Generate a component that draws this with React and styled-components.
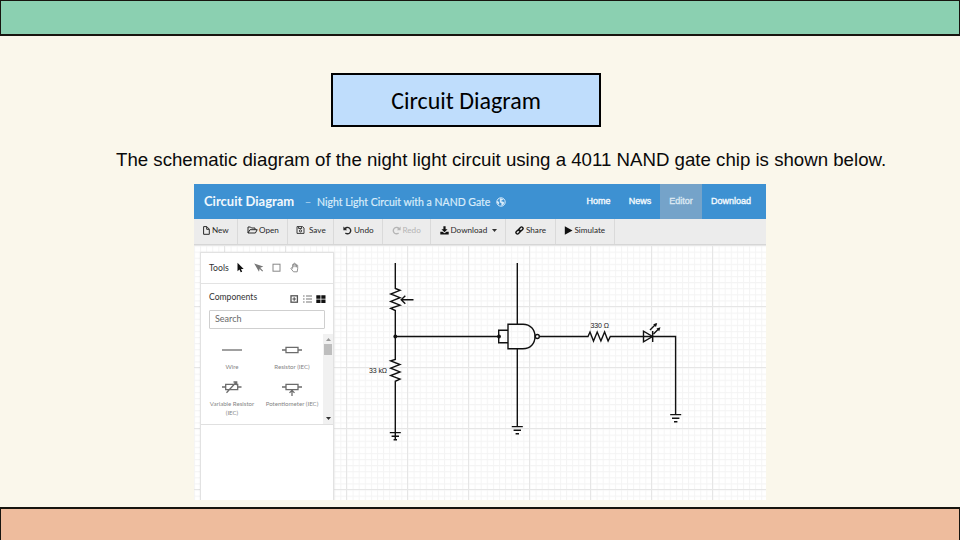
import React from "react";
import styled, { createGlobalStyle } from "styled-components";

const GlobalStyle = createGlobalStyle`
  * { box-sizing: border-box; }
  body { margin: 0; background: #faf7eb; overflow: hidden; }
`;

const Slide = styled.main`
  width: 960px;
  height: 540px;
  display: flex;
  flex-direction: column;
  align-items: center;
  background: #faf7eb;
  overflow: hidden;
`;

const Band = styled.div`
  flex: none;
  width: 960px;
  height: ${(p) => p.$height}px;
  background: ${(p) => p.$color};
  border: solid #17150f;
  border-width: ${(p) => p.$borders};
`;

const Heading = styled.h1`
  flex: none;
  width: 270px;
  height: 54px;
  margin: 37px 0 0 -28px;
  border: 2px solid #000;
  background: #bfddfc;
  color: #000;
  display: flex;
  align-items: center;
  justify-content: center;
  font: 400 24px Carlito, Lato, sans-serif;
`;

const Lead = styled.p`
  flex: none;
  width: 960px;
  height: 24px;
  margin: 21px 0 12px;
  padding-left: 116px;
  font: 400 18.67px/24px "Liberation Sans", Arial, sans-serif;
  white-space: nowrap;
  color: #0a0a0a;
`;

const AppWindow = styled.section`
  flex: none;
  width: 572px;
  height: 316px;
  margin: 0 0 7px;
  display: flex;
  flex-direction: column;
  font-family: Lato, sans-serif;
  background: #fff;
  overflow: hidden;
`;

const Header = styled.header`
  height: 35px;
  flex: none;
  display: flex;
  align-items: center;
  padding-left: 10px;
  background: #3d91d2;
  color: #fff;
`;

const Brand = styled.div`
  width: 101px;
  font-weight: 700;
  font-size: 13px;
  white-space: nowrap;
  padding-bottom: 2px;
  color: #f1f8fd;
`;

const DocTitle = styled.div`
  width: 272px;
  display: flex;
  align-items: center;
  white-space: nowrap;
  font-size: 10.5px;
  -webkit-text-stroke: 0.2px #d9ecfa;
  color: #d9ecfa;
`;

const Dash = styled.span`
  width: 12px;
  opacity: 0.65;
`;

const GlobeSlot = styled.span`
  display: flex;
  margin-left: 6px;
`;

const NavLink = styled.a`
  height: 35px;
  width: ${(p) => p.$width}px;
  display: flex;
  align-items: center;
  justify-content: center;
  padding-bottom: 1px;
  font: 400 9px "Liberation Sans", Arial, sans-serif;
  -webkit-text-stroke: 0.35px currentColor;
  color: ${(p) => (p.$active ? "#dce8f2" : "#f4fafe")};
  background: ${(p) => (p.$active ? "#75a3c9" : "transparent")};
`;

const Toolbar = styled.div`
  height: 26px;
  flex: none;
  display: flex;
  background: #ececec;
  border-bottom: 1px solid #d6d6d6;
`;

const ToolButton = styled.div`
  width: ${(p) => p.$width}px;
  display: flex;
  align-items: center;
  padding: 0 0 3px ${(p) => p.$pad}px;
  gap: ${(p) => p.$gap || 2}px;
  border-right: 1px solid #dadada;
  font-size: 8.15px;
  white-space: nowrap;
  color: ${(p) => (p.$disabled ? "#b5b5b5" : "#292929")};
`;

const MenuCaret = styled.span`
  display: flex;
  margin-left: 3px;
`;

const Workspace = styled.div`
  position: relative;
  height: 255px;
  flex: none;
  padding: 7px 0 0 6px;
`;

const Drawing = styled.svg`
  position: absolute;
  inset: 0;
`;

const Panel = styled.aside`
  position: relative;
  width: 134px;
  height: 250px;
  background: #fff;
  border: 1px solid #e2e2e2;
  border-bottom: 0;
  box-shadow: 0 0 2px rgba(0, 0, 0, 0.08);
  color: #333;
`;

const ToolsRow = styled.div`
  height: 31px;
  display: flex;
  align-items: center;
  padding: 0 0 1px 8px;
  border-bottom: 1px solid #e3e3e3;
  font-size: 8.7px;
`;

const ToolsLabel = styled.span`
  width: 27px;
`;

const ToolIcon = styled.span`
  width: 18px;
  height: 12px;
  display: flex;
`;

const ComponentsRow = styled.div`
  height: 26px;
  display: flex;
  align-items: center;
  padding: 0 7px 0 8px;
  justify-content: space-between;
  font-size: 8.6px;
`;

const ViewSwitch = styled.span`
  display: flex;
  padding-top: 4px;
`;

const SearchField = styled.div`
  width: 116px;
  height: 19px;
  margin-left: 8px;
  border: 1px solid #cfcfcf;
  border-radius: 1px;
  padding-left: 5px;
  font-size: 9px;
  line-height: 16px;
  color: #686868;
`;

const Library = styled.div`
  height: 96px;
  display: flex;
  border-bottom: 1px solid #e0e0e0;
`;

const Parts = styled.div`
  width: 123px;
  padding-top: 14px;
  display: grid;
  grid-template-columns: 62px 58px;
  grid-template-rows: 37px 40px;
`;

const Part = styled.div`
  display: flex;
  flex-direction: column;
  align-items: center;
  font-size: 6.1px;
  line-height: 9px;
  text-align: center;
  color: #858585;
`;

const PartLabel = styled.span`
  margin-top: 5px;
  white-space: pre;
`;

const Scrollbar = styled.div`
  width: 10px;
  height: 90px;
  margin-top: 5px;
  padding: 4px 0;
  background: #f1f1f1;
  display: flex;
  flex-direction: column;
  align-items: center;
`;

const Thumb = styled.div`
  width: 8px;
  height: 11px;
  margin-top: 3px;
  background: #bebebe;
`;

const Spacer = styled.div`
  flex: 1;
`;

const NewIcon = () => (
  <svg width="7" height="9" viewBox="0 0 7 9" fill="none" stroke="currentColor">
    <path d="M.6.6h3.2l2.5 2.5v5.2H.6zM3.7.8v2.5h2.4" />
  </svg>
);
const OpenIcon = () => (
  <svg width="11" height="8" viewBox="0 0 11 8" fill="none" stroke="currentColor">
    <path d="M1 7V1h2.5l1 1H8v1.6M1 7l2-3.3h7.2L8.4 7z" />
  </svg>
);
const SaveIcon = () => (
  <svg width="9" height="8" viewBox="0 0 9 8" fill="none" stroke="currentColor" strokeWidth=".9">
    <path d="M1 .6h5.5L8 2v5.4H1zM2.6.8v1.7h3V.8" />
    <circle cx="4.5" cy="4.9" r="1.1" />
  </svg>
);
const TurnIcon = ({ flip }) => (
  <svg width="9" height="9" viewBox="0 0 9 9" fill="none" stroke="currentColor">
    <g transform={flip ? "translate(9 0) scale(-1 1)" : undefined}>
      <path d="M1.8 2.9A3.2 3.2 0 1 1 2.4 7" strokeWidth="1.4" />
      <path d="M.4.5v3.8h3.8z" fill="currentColor" stroke="none" />
    </g>
  </svg>
);
const DownloadIcon = () => (
  <svg width="9" height="9" viewBox="0 0 9 9" fill="#111">
    <path d="M3.4.3h2.2v2.9h2L4.5 6.2 1.4 3.2h2zM.3 5.8h2.2l2 1.5 2-1.5h2.2v2.7H.3z" />
  </svg>
);
const ShareIcon = () => (
  <svg width="9" height="9" viewBox="0 0 9 9" fill="none" stroke="#111" strokeWidth="1.4">
    <rect x="-2.4" y="-1.5" width="4.8" height="3" rx="1.5" transform="translate(5.9 3.1) rotate(-45)" />
    <rect x="-2.4" y="-1.5" width="4.8" height="3" rx="1.5" transform="translate(3.1 5.9) rotate(-45)" />
  </svg>
);
const PlayIcon = () => (
  <svg width="9" height="9" viewBox="0 0 9 9" fill="#111">
    <path d="M.8.3 8.5 4.5.8 8.7z" />
  </svg>
);
const Caret = ({ up, color = "#333" }) => (
  <svg width="5" height="3" viewBox="0 0 5 3">
    <path d={up ? "M0 3h5L2.5 0z" : "M0 0h5L2.5 3z"} fill={color} />
  </svg>
);
const GlobeIcon = () => (
  <svg width="10" height="10" viewBox="0 0 10 10">
    <circle cx="5" cy="5" r="4.2" fill="none" stroke="#d9ecfa" />
    <path d="M3.8 1.2 7.5 2 6 3.4 4.6 4l2.8.8 1 1.3-2 2.5-1.2-.2.4-2-1.8-1.2zM1 4l1.5.6.8 1.4-.5 1.6L1 6z" fill="#d9ecfa" />
  </svg>
);

const PointerIcon = ({ color = "#111" }) => (
  <svg width="9" height="11" viewBox="0 0 9 11">
    <path d="M1.5.8v8.4l2-1.8 1.2 2.9 1.5-.6L5 6.9h2.7z" fill={color} />
  </svg>
);
const ArrowIcon = () => (
  <svg width="10" height="11" viewBox="0 0 10 11">
    <path d="M.2 1.4 9.3 4.6 5.8 6 5 9.8z" fill="#777" />
    <path d="m4.5 5 4.2 4.2" stroke="#777" strokeWidth="1.1" />
  </svg>
);
const SquareIcon = () => (
  <svg width="9" height="11" viewBox="0 0 9 11">
    <rect x="1" y="2.2" width="7" height="7" fill="none" stroke="#888" />
  </svg>
);
const HandIcon = () => (
  <svg width="9" height="11" viewBox="0 0 9 11" fill="none" stroke="#777" strokeWidth=".8">
    <path d="M2.6 6.3V2.9q0-.8.6-.8t.6.8V1.9q0-.7.7-.7t.7.7v.8q0-.7.6-.7t.6.8v.8q.1-.6.7-.6t.6.8v2.7L7.2 9.8H3.5L1 6.7q-.3-.9.5-.9zM3.8 2.8v2.4M5.2 2.6v2.6M6.5 3.4v1.9" />
  </svg>
);
const ViewIcons = () => (
  <svg width="36" height="10" viewBox="0 0 36 10">
    <rect x="1" y="1.8" width="6.4" height="6.4" fill="none" stroke="#555" strokeWidth="1.3" />
    <path d="M4.2 3.2v3.6M2.4 5H6" stroke="#555" strokeWidth="1.2" />
    <path d="M13 2h1.6M13 5h1.6M13 8h1.6M16 2h6M16 5h6M16 8h6" stroke="#777" strokeWidth="1.1" />
    <path d="M26.3 1.2h4.2v3.5h-4.2zM31.3 1.2h4.2v3.5h-4.2zM26.3 5.4h4.2v3.5h-4.2zM31.3 5.4h4.2v3.5h-4.2z" fill="#111" />
  </svg>
);

const symbols = {
  wire: <path d="M0 7h20" />,
  resistor: <path d="M0 7h4M16 7h4M4 4.4h12v5.2H4z" />,
  variable: <path d="M0 7h3.7M15.7 7H19.5M3.7 4.4h12v5.2h-12zM4.5 12.7 14.6 1.8M11.5 2h3.2v3.2" />,
  pot: <path d="M0 7h4M16 7h4M4 4.4h12v5.2H4zM10 16v-5.7M7.5 12.9 10 10.4l2.5 2.5" />,
};
const Symbol = ({ kind }) => (
  <svg width="20" height="14" viewBox="0 0 20 14" overflow="visible" fill="none" stroke="#6c6c6c" strokeWidth="1.3">
    {symbols[kind]}
  </svg>
);

const parts = [
  ["wire", "Wire"],
  ["resistor", "Resistor (IEC)"],
  ["variable", "Variable Resistor\n(IEC)"],
  ["pot", "Potentiometer (IEC)"],
];

const buttons = [
  { label: "New", icon: <NewIcon />, width: 43.5, pad: 9 },
  { label: "Open", icon: <OpenIcon />, width: 50, pad: 9, gap: 1.5 },
  { label: "Save", icon: <SaveIcon />, width: 46.5, pad: 8.5, gap: 4 },
  { label: "Undo", icon: <TurnIcon />, width: 48.5, pad: 9 },
  { label: "Redo", icon: <TurnIcon flip />, width: 48, pad: 9 , disabled: true },
  { label: "Download", icon: <DownloadIcon />, width: 75.5, pad: 9, caret: true },
  { label: "Share", icon: <ShareIcon />, width: 49.5, pad: 9 },
  { label: "Simulate", icon: <PlayIcon />, width: 59, pad: 8.5, gap: 1.5 },
];

const GroundSymbol = ({ x, y }) => (
  <path d={`M${x - 5.5} ${y}h11M${x - 3.7} ${y + 3.7}h7.4M${x - 1.7} ${y + 7.2}h3.4`} />
);

const Circuit = () => (
  <Drawing width="572" height="255" viewBox="194 245 572 255">
    <defs>
      <pattern id="minor" x="346.5" y="306.5" width="6.1" height="6.1" patternUnits="userSpaceOnUse">
        <path d="M0 .5h6.1M.5 0v6.1" stroke="#f4f4f4" fill="none" />
      </pattern>
      <pattern id="major" x="346" y="306" width="61" height="61" patternUnits="userSpaceOnUse">
        <path d="M0 .5h61M.5 0v61" stroke="#e6e6e6" fill="none" />
      </pattern>
    </defs>
    <rect x="194" y="245" width="572" height="255" fill="url(#minor)" />
    <rect x="194" y="245" width="572" height="255" fill="url(#major)" />
    <g fill="none" stroke="#111" strokeWidth="1.4">
      <path d="M395.3 263v25.5l4.7 1.8-9.3 3.7 9.3 3.7-9.3 3.7 9.3 3.7-9.3 3.2 4.6 2.2v49l-4.6 1.3 9.3 3.7-9.3 3.7 9.3 3.7-9.3 3.7 9.3 3.5-4.7 2.2V440" />
      <path d="M413.5 299.8h-12M405.3 295.8l-4.1 4 4.1 4M395.3 336.5H499M508 330.3h-9.3v12.4h9.3M517.3 263v61M517.3 348.7V427M539.5 336.5H588l2-4.5 3.5 9 3.7-9 3.7 9 3.7-9 3.5 9 2.2-4.5h65.3v78" />
      <path d="M508 324.2h15c7.5 0 12 5.5 12 12.3s-4.5 12.2-12 12.2h-15z" />
      <circle cx="537.3" cy="336.5" r="2" />
      <path d="M643.5 331.2v10.6l9-5.3zM652.7 331v11" />
      <path d="m650 330 6-6M653.5 334l5.5-5.5" />
      <GroundSymbol x={395.3} y={432.6} />
      <GroundSymbol x={517.3} y={426.6} />
      <GroundSymbol x={675.7} y={414.6} />
    </g>
    <path d="m657.2 323-1.2 4-2.8-2.8zM660.5 327.3l-1.3 4-2.7-2.7z" fill="#111" />
    <circle cx="395.3" cy="336.5" r="1.9" fill="#111" />
    <circle cx="499" cy="336.5" r="1.9" fill="#111" />
    <g fontFamily="Liberation Sans, sans-serif" fontSize="7" fill="#222">
      <text x="369" y="372.5" textLength="18">33 kΩ</text>
      <text x="590.5" y="328" textLength="18.5">330 Ω</text>
    </g>
  </Drawing>
);

export default function App() {
  return (
    <>
      <GlobalStyle />
      <Slide>
        <Band $height={36} $color="#8bd0b1" $borders="1px 1px 2px" />
        <Heading>Circuit Diagram</Heading>
        <Lead>
          The schematic diagram of the night light circuit using a 4011 NAND gate chip is shown below.
        </Lead>
        <AppWindow>
          <Header>
            <Brand>Circuit Diagram</Brand>
            <DocTitle>
              <Dash>–</Dash>
              Night Light Circuit with a NAND Gate
              <GlobeSlot><GlobeIcon /></GlobeSlot>
            </DocTitle>
            <NavLink $width={43}>Home</NavLink>
            <NavLink $width={40}>News</NavLink>
            <NavLink $width={42} $active>Editor</NavLink>
            <NavLink $width={58}>Download</NavLink>
          </Header>
          <Toolbar>
            {buttons.map((b) => (
              <ToolButton key={b.label} $width={b.width} $pad={b.pad} $gap={b.gap} $disabled={b.disabled}>
                {b.icon}
                <span>{b.label}</span>
                {b.caret && <MenuCaret><Caret /></MenuCaret>}
              </ToolButton>
            ))}
          </Toolbar>
          <Workspace>
            <Circuit />
            <Panel>
              <ToolsRow>
                <ToolsLabel>Tools</ToolsLabel>
                <ToolIcon><PointerIcon /></ToolIcon>
                <ToolIcon><ArrowIcon /></ToolIcon>
                <ToolIcon><SquareIcon /></ToolIcon>
                <ToolIcon><HandIcon /></ToolIcon>
              </ToolsRow>
              <ComponentsRow>
                <span>Components</span>
                <ViewSwitch><ViewIcons /></ViewSwitch>
              </ComponentsRow>
              <SearchField>Search</SearchField>
              <Library>
                <Parts>
                  {parts.map(([kind, label]) => (
                    <Part key={kind}>
                      <Symbol kind={kind} />
                      <PartLabel>{label}</PartLabel>
                    </Part>
                  ))}
                </Parts>
                <Scrollbar>
                  <Caret up color="#999" />
                  <Thumb />
                  <Spacer />
                  <Caret />
                </Scrollbar>
              </Library>
            </Panel>
          </Workspace>
        </AppWindow>
        <Band $height={33} $color="#eebc9d" $borders="2px 1px 0" />
      </Slide>
    </>
  );
}
